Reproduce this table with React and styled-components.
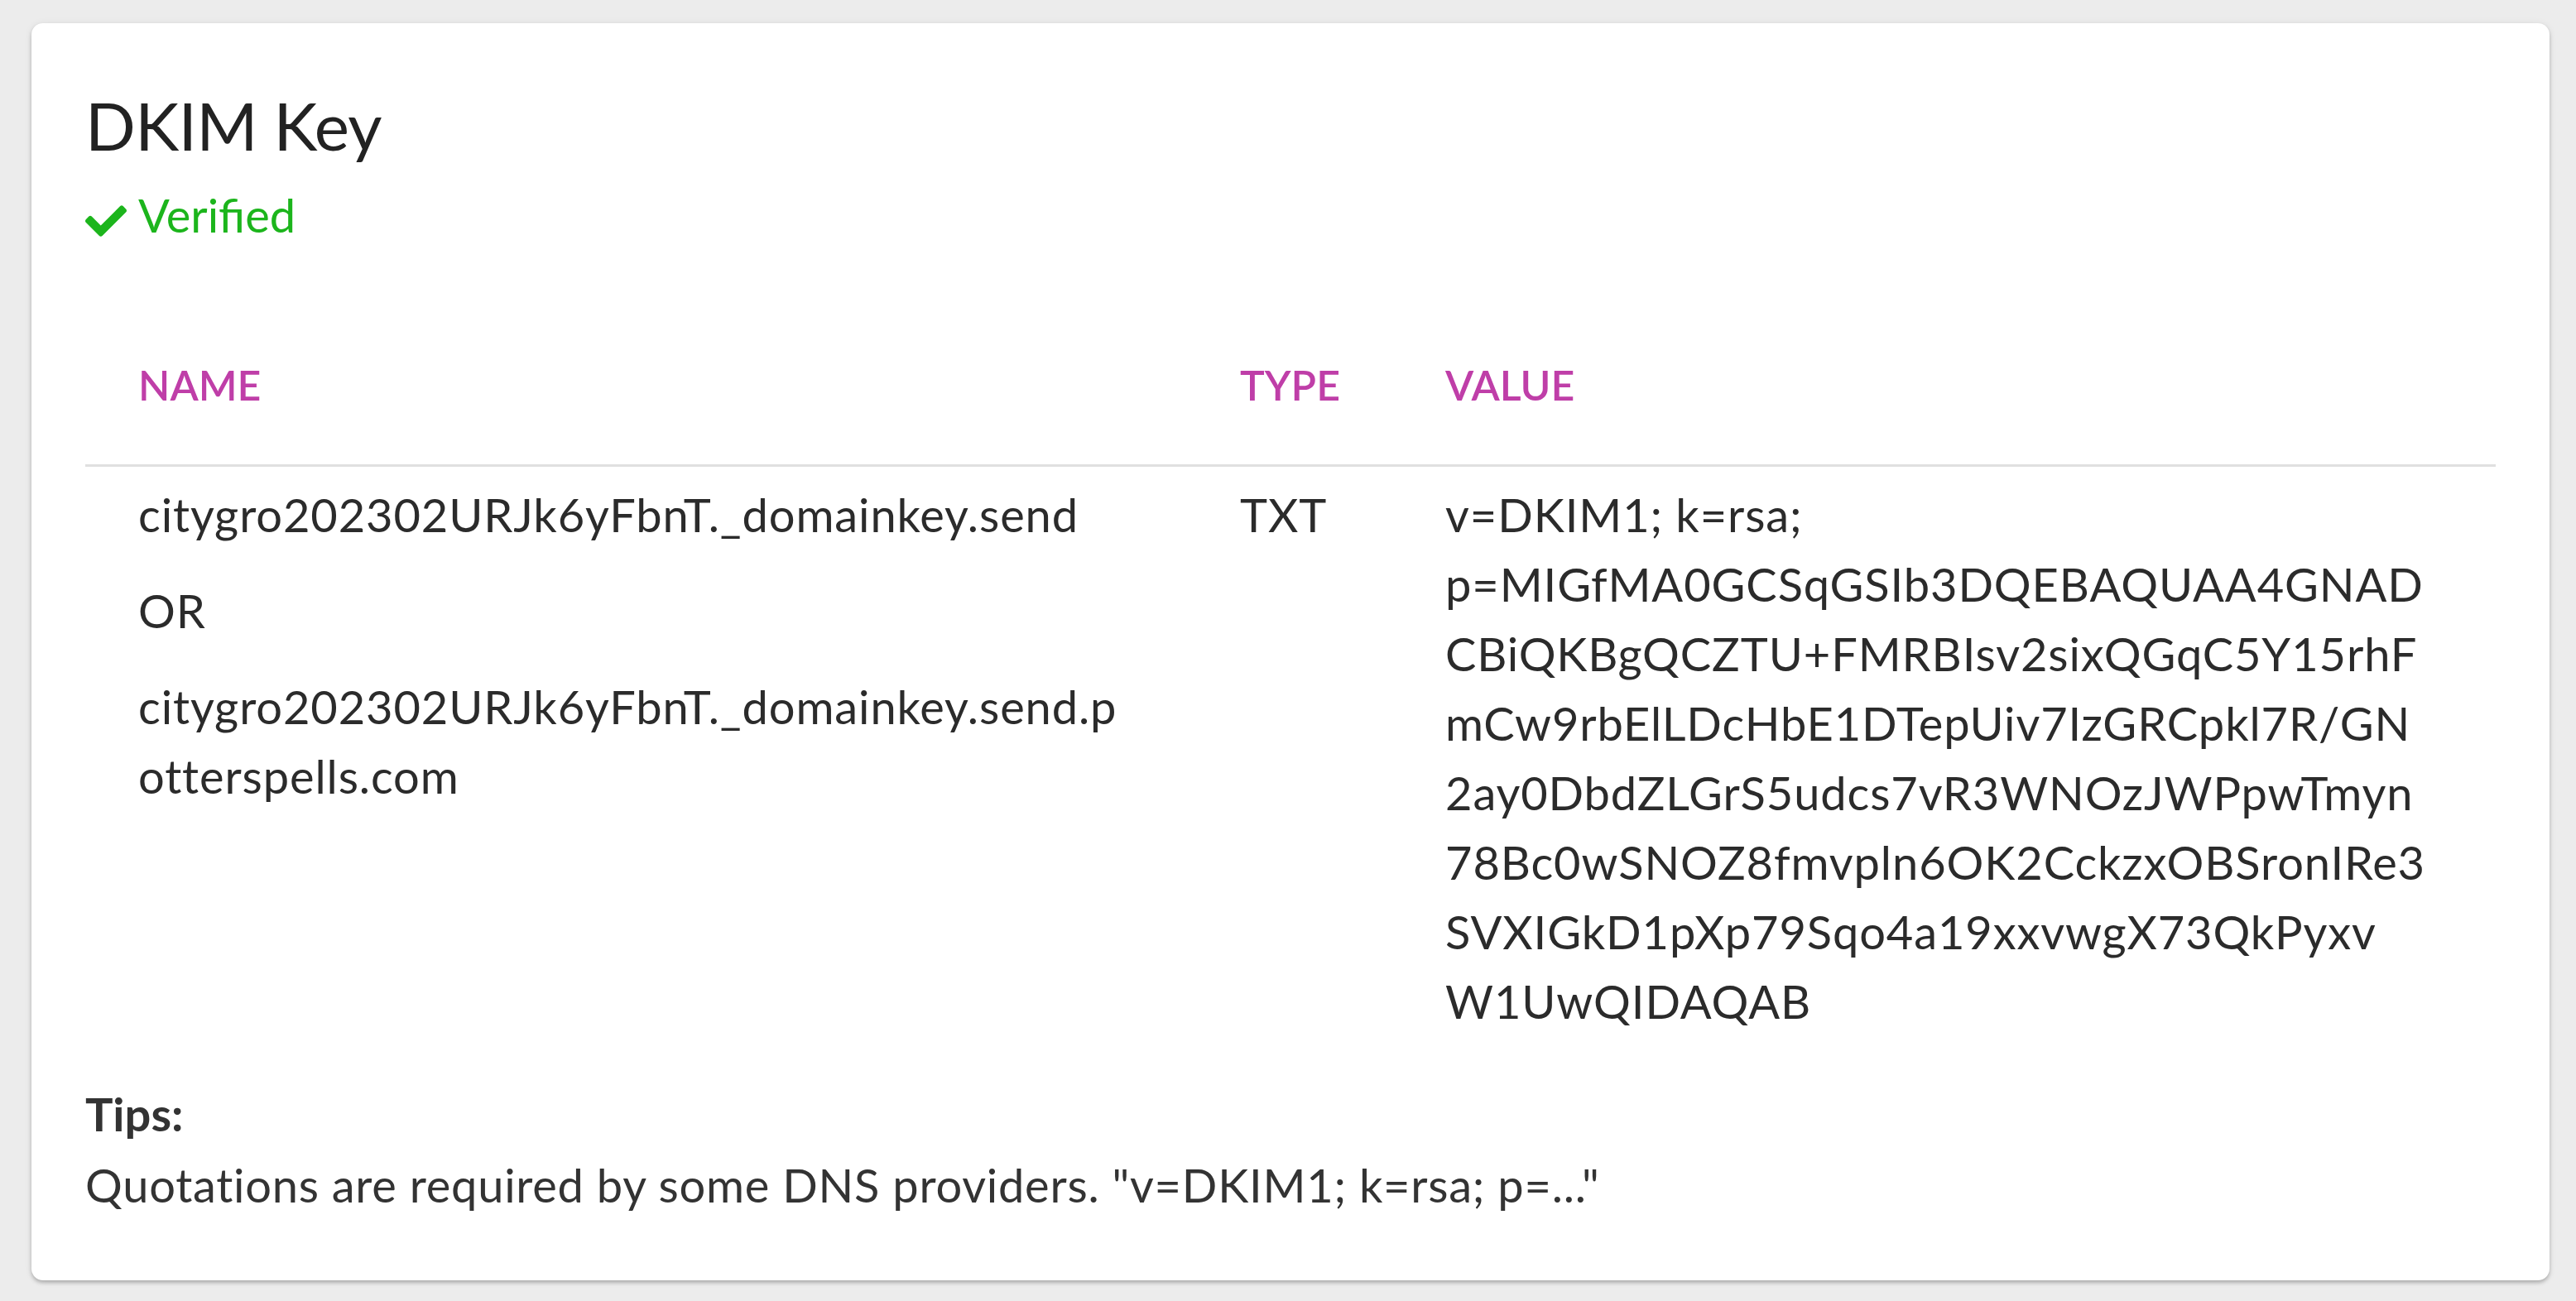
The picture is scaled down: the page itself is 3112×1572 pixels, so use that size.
import React from "react";
import styled, { createGlobalStyle } from "styled-components";
import { FaCheck } from "react-icons/fa";

const GlobalStyle = createGlobalStyle`
  html, body {
    margin: 0;
    padding: 0;
    background: #ececec;
  }
  body {
    font-family: Lato, "Noto Sans", sans-serif;
    color: #2b2b2b;
  }
`;

const record = {
  names: [
    ["citygro202302URJk6yFbnT._domainkey.send"],
    ["OR"],
    ["citygro202302URJk6yFbnT._domainkey.send.p", "otterspells.com"],
  ],
  type: "TXT",
  value: [
    "v=DKIM1; k=rsa;",
    "p=MIGfMA0GCSqGSIb3DQEBAQUAA4GNAD",
    "CBiQKBgQCZTU+FMRBIsv2sixQGqC5Y15rhF",
    "mCw9rbElLDcHbE1DTepUiv7IzGRCpkl7R/GN",
    "2ay0DbdZLGrS5udcs7vR3WNOzJWPpwTmyn",
    "78Bc0wSNOZ8fmvpln6OK2CckzxOBSronIRe3",
    "SVXIGkD1pXp79Sqo4a19xxvwgX73QkPyxv",
    "W1UwQIDAQAB",
  ],
};

export default function App() {
  return (
    <Page>
      <GlobalStyle />
      <Card>
        <Title>DKIM Key</Title>
        <Status>
          <FaCheck size={50} />
          <span>Verified</span>
        </Status>
        <Table>
          <HeadCell>NAME</HeadCell>
          <HeadCell>TYPE</HeadCell>
          <HeadCell>VALUE</HeadCell>
          <Divider />
          <Cell>
            {record.names.map((lines, i) => (
              <Para key={i}>
                {lines.map((l) => (
                  <Line key={l}>{l}</Line>
                ))}
              </Para>
            ))}
          </Cell>
          <Cell>{record.type}</Cell>
          <Cell>
            {record.value.map((l) => (
              <Line key={l}>{l}</Line>
            ))}
          </Cell>
        </Table>
        <Tips>
          <TipsLabel>Tips:</TipsLabel>
          <TipsText>
            Quotations are required by some DNS providers. "v=DKIM1; k=rsa; p=..."
          </TipsText>
        </Tips>
      </Card>
    </Page>
  );
}

const Page = styled.div`
  padding: 28px 32px 29px 38px;
`;

const Card = styled.div`
  background: #fff;
  border-radius: 14px;
  box-shadow: 0 3px 4px rgba(0, 0, 0, 0.22), 0 1px 10px rgba(0, 0, 0, 0.08);
  padding: 75px 65px 72px 65px;
`;

const Title = styled.h1`
  margin: 0;
  font-size: 80px;
  line-height: 96px;
  font-weight: 400;
  letter-spacing: -0.7px;
  color: #222;
`;

const Status = styled.div`
  display: flex;
  align-items: center;
  gap: 14px;
  margin-top: 19px;
  font-size: 56px;
  line-height: 84px;
  color: #1cb51c;
  svg {
    margin-top: 14px;
  }
`;

const Table = styled.div`
  display: grid;
  grid-template-columns: 1331px 248px 1fr;
  margin-top: 62px;
`;

const HeadCell = styled.div`
  padding: 64px 0 58px 64px;
  font-size: 50px;
  line-height: 75px;
  font-weight: 600;
  color: #bf3ea8;
`;

const Divider = styled.div`
  grid-column: 1 / -1;
  height: 3px;
  background: #e0e0e0;
`;

const Cell = styled.div`
  padding: 16px 0 0 64px;
  font-size: 56px;
  line-height: 84px;
  letter-spacing: 0.9px;
  color: #2b2b2b;
`;

const Para = styled.div`
  & + & {
    margin-top: 32px;
  }
`;

const Line = styled.div`
  white-space: nowrap;
`;

const Tips = styled.div`
  margin-top: 51px;
  font-size: 56px;
  line-height: 86px;
  letter-spacing: 0.75px;
  color: #333;
`;

const TipsLabel = styled.div`
  font-weight: 700;
  letter-spacing: 0;
`;

const TipsText = styled.div``;
